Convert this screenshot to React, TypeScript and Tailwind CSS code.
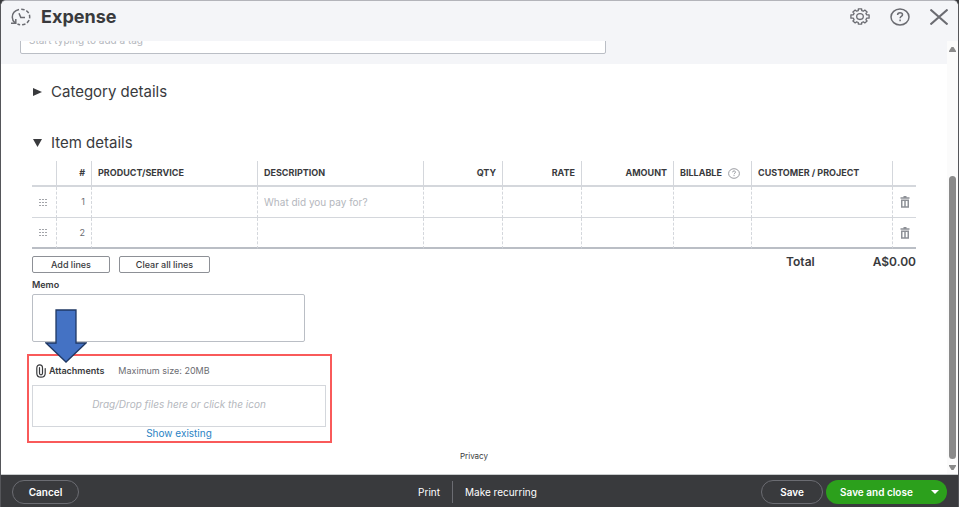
import { useState } from 'react';

const columns = [
  { key: 'product', label: 'PRODUCT/SERVICE', width: 'w-[166px]', align: 'text-left' },
  { key: 'description', label: 'DESCRIPTION', width: '', align: 'text-left' },
  { key: 'qty', label: 'QTY', width: 'w-[79px]', align: 'text-right' },
  { key: 'rate', label: 'RATE', width: 'w-[79px]', align: 'text-right' },
  { key: 'amount', label: 'AMOUNT', width: 'w-[92px]', align: 'text-right' },
  { key: 'billable', label: 'BILLABLE', width: 'w-[78px]', align: 'text-left' },
  { key: 'customer', label: 'CUSTOMER / PROJECT', width: 'w-[141px]', align: 'text-left' },
];

function HistoryIcon() {
  return (
    <svg className="w-5 h-4.5" viewBox="0 0 20 18" fill="none" stroke="#6b6c72" strokeWidth="1.5">
      <path d="M4 14.800C2 13.200 1.300 11 1.300 9.200 1.300 5 4.300 2.200 8 1.400" />
      <path d="M10.200 1.200C15 1.200 18.700 4.600 18.700 9S15 16.800 10.500 16.800c-1.600 0-3-.3-4-1" strokeDasharray="3.500 1.800" />
      <path d="M0 15.200h4.800V11M8 5.200l1.800 4.300H14" />
    </svg>
  );
}

function GearIcon() {
  return (
    <svg className="w-5 h-4.5" viewBox="0 0 20 18" fill="none" stroke="#6b6c72" strokeWidth="1.3" strokeLinejoin="round">
      <path d="M8.300 .900h3.400v1.700l1.700.6 1.400-1.100 2.300 2-1.200 1.300.7 1.400h2.500v3.400h-2.500l-.7 1.500 1.200 1.200-2.300 2-1.400-1.100-1.700.7v1.600H8.300v-1.600l-1.700-.7-1.400 1.100-2.300-2 1.200-1.200-.7-1.500H.900V6.800h2.500l.7-1.400-1.200-1.300 2.300-2 1.400 1.100 1.700-.6z" />
      <ellipse cx="10" cy="8.600" rx="3.300" ry="2.900" />
    </svg>
  );
}

function HelpIcon({ className, width }: { className: string; width: number }) {
  return (
    <svg className={className} viewBox="0 0 20 18" fill="none" stroke="currentColor" strokeWidth={width}>
      <ellipse cx="10" cy="9" rx="9" ry="8" />
      <path d="M7.600 7c0-1.500 1-2.300 2.400-2.300s2.500.8 2.500 2.100c0 1.600-2.400 1.700-2.400 3.400M10.100 11.600v1.700" />
    </svg>
  );
}

function GripIcon() {
  return (
    <svg className="w-2 h-[7px]" viewBox="0 0 8 7" fill="#a3a5aa">
      {[0, 3, 6].map((x) => [0, 3, 6].map((y) => (
        <rect key={`${x}-${y}`} x={x} y={y} width="2" height="1" />
      )))}
    </svg>
  );
}

function TrashIcon() {
  return (
    <svg className="w-2.5 h-3" viewBox="0 0 10 12" fill="none" stroke="#8d9096" strokeWidth="1.500">
      <path d="M.500 2h9M3.500.750h3M1.750 4.200h6.500v6.800h-6.500zM5 4v7" />
    </svg>
  );
}

function PaperclipIcon() {
  return (
    <svg className="w-2.5 h-3.5" viewBox="0 0 10 14" fill="none" stroke="#393a3d" strokeWidth="1.200" strokeLinecap="round">
      <path d="M6.500 4v5.300a1.500 1.500 0 0 1-3 0V3.600M.800 4.200C.800 2 2 .800 3.800.800S6.500 2 6.500 3.800M.800 4v5.200c0 2.600 1.800 4 4.100 4s4.300-1.400 4.300-4V4.500" />
    </svg>
  );
}

function ItemTable() {
  return (
    <table className="w-full table-fixed border-separate border-spacing-0 text-[9px]">
      <thead>
        <tr className="h-[26px] *:border-b-2 *:border-[#d4d7dc] *:px-1.5">
          <th className="w-[24px]" aria-label="Reorder" />
          <th className="w-[35px] border-l text-right font-bold">#</th>
          {columns.map((col) => (
            <th key={col.key} className={`border-l font-bold whitespace-nowrap ${col.width} ${col.align}`}>
              {col.key === 'billable' ? (
                <span className="flex items-center gap-1.5">
                  {col.label}
                  <HelpIcon className="w-3 h-[11px] shrink-0 text-[#8d9096]" width={1.5} />
                </span>
              ) : (
                col.label
              )}
            </th>
          ))}
          <th className="w-[24px] border-l" aria-label="Delete" />
        </tr>
      </thead>
      <tbody>
        {[1, 2].map((row) => (
          <tr key={row} className="h-[31px] *:border-[#d4d7dc] *:border-b last:*:border-b-2 last:*:border-b-[#babec5]">
            <td className="pl-[7px]">
              <GripIcon />
            </td>
            <td className="border-l [border-left-style:dashed] px-1.5 text-right text-[#6b6c72]">{row}</td>
            {columns.map((col) => (
              <td key={col.key} className="border-l [border-left-style:dashed] px-1.5">
                <input
                  className="block w-full bg-transparent text-[10px] leading-3 outline-none placeholder:text-[#b4b7bd]"
                  aria-label={`${col.label} ${row}`}
                  placeholder={row === 1 && col.key === 'description' ? 'What did you pay for?' : undefined}
                />
              </td>
            ))}
            <td className="border-l [border-left-style:dashed]">
              <button className="flex w-full justify-center" aria-label={`Delete line ${row}`}>
                <TrashIcon />
              </button>
            </td>
          </tr>
        ))}
      </tbody>
    </table>
  );
}

export default function App() {
  const [memo, setMemo] = useState('');

  return (
    <div className="h-screen bg-[#393a3d] font-[Inter,'Liberation_Sans',sans-serif] text-[#393a3d]">
      <div className="flex h-full flex-col overflow-hidden rounded-t-md border-x border-t border-[#55565a] border-t-[#b3b4ba] bg-white">
        <header className="flex h-10 shrink-0 items-center bg-[#f4f5f8] pl-2.5 pr-2.5 pb-2">
          <HistoryIcon />
          <h1 className="ml-2.5 text-[18px] font-bold leading-5">Expense</h1>
          <div className="ml-auto flex items-center gap-5 text-[#6b6c72]">
            <button aria-label="Settings"><GearIcon /></button>
            <button aria-label="Help"><HelpIcon className="w-5 h-4.5" width={1.5} /></button>
            <button aria-label="Close">
              <svg className="w-[18px] h-4" viewBox="0 0 18 16" stroke="currentColor" strokeWidth="2">
                <path d="M.500.500l17 15M17.500.500l-17 15" />
              </svg>
            </button>
          </div>
        </header>

        <div className="flex min-h-0 flex-1">
          <main className="min-w-0 flex-1 overflow-hidden">
            {/* Tags field, scrolled under the header */}
            <section className="flex h-[23px] flex-col justify-end overflow-hidden bg-[#f4f5f8] px-[19px] pb-2.5">
              <input
                aria-label="Tags"
                placeholder="Start typing to add a tag"
                className="h-7 w-[586px] shrink-0 rounded-xs border border-[#babec5] bg-white px-2 text-[10px] placeholder:text-[#b4b7bd]"
              />
            </section>

            <div className="px-[31px] pt-[18px]">
              <button className="flex items-center gap-[9px] text-[15px] leading-5">
                <svg className="w-2.5 h-2" viewBox="0 0 10 8" fill="currentColor"><path d="M1 0l9 4-9 4z" /></svg>
                Category details
              </button>
              <button className="mt-[31px] flex items-center gap-[9px] text-[15px] leading-5">
                <svg className="w-2.5 h-2" viewBox="0 0 10 8" fill="currentColor"><path d="M1 0h9L5.500 8z" /></svg>
                Item details
              </button>

              <div className="mt-2">
                <ItemTable />
              </div>

              <div className="mt-[7px] flex items-start">
                <button className="h-[17px] w-[78px] rounded-xs border border-[#8d9096] text-[9px] leading-3 font-medium">Add lines</button>
                <button className="ml-[9px] h-[17px] w-[91px] rounded-xs border border-[#8d9096] text-[9px] leading-3 font-medium">Clear all lines</button>
                <div className="ml-auto flex gap-[58px] text-[12px] leading-3 font-semibold">
                  <span>Total</span>
                  <span>A$0.00</span>
                </div>
              </div>

              <label htmlFor="memo" className="mt-1.5 block text-[9px] leading-3 font-semibold">Memo</label>
              <textarea
                id="memo"
                value={memo}
                onChange={(e) => setMemo(e.target.value)}
                className="mt-[3px] block h-12 w-[273px] resize-none rounded-xs border border-[#babec5] p-1 text-[10px]"
              />

              <section className="relative -ml-[5px] mt-3 w-[305px] border-2 border-[#f95a5a] pl-[3px] pr-1">
                <svg className="absolute left-4 -top-[47px] w-[42px] h-[54px]" viewBox="0 0 42 54" fill="#4472c4" stroke="#1f3864" strokeWidth="1.300">
                  <path d="M11 1h20v33h10L21 53 1 34h10z" />
                </svg>
                <div className="flex h-[29px] items-center pl-1 text-[9px]">
                  <PaperclipIcon />
                  <label htmlFor="files" className="ml-[3px] font-semibold">Attachments</label>
                  <span className="ml-3.5 text-[#6b6c72]">Maximum size: 20MB</span>
                </div>
                <label className="flex h-[42px] items-center justify-center border border-[#d4d7dc] pb-1 text-[10px] italic text-[#b4b7bd]">
                  Drag/Drop files here or click the icon
                  <input id="files" type="file" multiple className="sr-only" />
                </label>
                <a href="#existing" className="block h-3.5 text-center text-[10px] leading-3 text-[#2b83c4]">Show existing</a>
              </section>

              <a href="#privacy" className="mt-[7px] block text-center text-[8px] leading-3">Privacy</a>
            </div>
          </main>

          {/* Scrollbar */}
          <div className="flex w-[11px] flex-col items-center bg-[#fbfbfb] pt-1.5 pb-1 text-[#8a8a8a]">
            <svg className="w-[7px] h-[5px]" viewBox="0 0 7 5" fill="currentColor"><path d="M2.500 0h2L7 4v1H0V4z" /></svg>
            <div className="mt-[124px] w-[7px] flex-1 rounded-full bg-[#8a8a8a]" />
            <svg className="mt-1.5 w-[7px] h-[5px]" viewBox="0 0 7 5" fill="currentColor"><path d="M0 0h7v1L4.500 5h-2L0 1z" /></svg>
          </div>
        </div>

        <footer className="grid shrink-0 grid-cols-[1fr_auto_1fr] items-center border-t border-[#c9cccd] bg-[#393a3d] pt-[5px] pb-[3px] px-[11px] text-[10px] text-white">
          <button className="h-6 w-[67px] rounded-full border border-[#6b6c72] font-semibold">Cancel</button>
          <div className="flex items-center">
            <button className="pr-3">Print</button>
            <button className="h-[22px] border-l border-[#6b6c72] pl-3 pr-1">Make recurring</button>
          </div>
          <div className="flex justify-end gap-[3px]">
            <button className="h-6 w-[62px] rounded-full border border-[#6b6c72] font-semibold">Save</button>
            <div className="flex h-6 rounded-full bg-[#2ca01c]">
              <button className="w-[101px] font-semibold">Save and close</button>
              <button className="w-5" aria-label="More save options">
                <svg className="w-2 h-1 ml-1" viewBox="0 0 8 4" fill="currentColor"><path d="M0 0h8L4 4z" /></svg>
              </button>
            </div>
          </div>
        </footer>
      </div>
    </div>
  );
}
